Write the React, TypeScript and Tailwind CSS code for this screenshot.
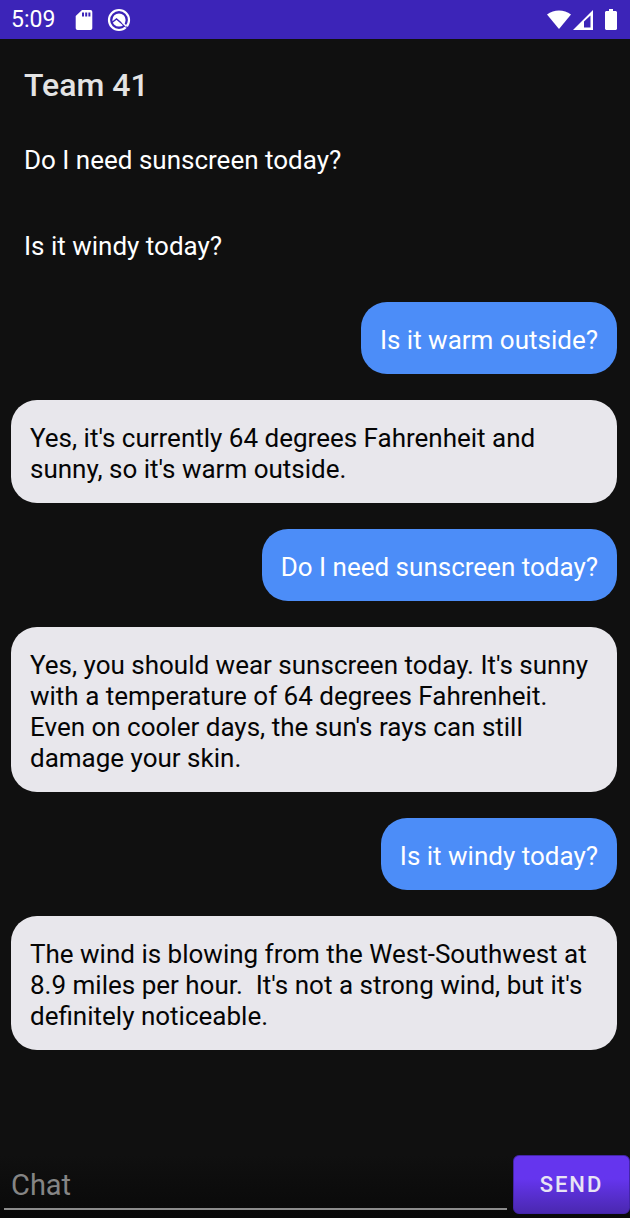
import { useState } from "react";

type Message = { from: "me" | "bot"; text: string };

const suggestions = ["Do I need sunscreen today?", "Is it windy today?"];

const initialMessages: Message[] = [
  { from: "me", text: "Is it warm outside?" },
  { from: "bot", text: "Yes, it's currently 64 degrees Fahrenheit and sunny, so it's warm outside." },
  { from: "me", text: "Do I need sunscreen today?" },
  {
    from: "bot",
    text: "Yes, you should wear sunscreen today. It's sunny with a temperature of 64 degrees Fahrenheit. Even on cooler days, the sun's rays can still damage your skin.",
  },
  { from: "me", text: "Is it windy today?" },
  {
    from: "bot",
    text: "The wind is blowing from the West-Southwest at 8.9 miles per hour.  It's not a strong wind, but it's definitely noticeable.",
  },
];

function StatusBar() {
  return (
    <div className="flex h-[39px] shrink-0 items-center bg-[#3c24b8] pr-[13px] pl-[11px] text-white">
      <span className="pt-px text-[23px] leading-7">5:09</span>
      <svg className="ml-5 h-[22px] w-[18px]" viewBox="0 0 18 22" aria-hidden="true">
        <path fill="#fff" fillRule="evenodd" d="M7 1h8.5A1.8 1.8 0 0 1 17.300 2.800v16.400a1.800 1.800 0 0 1-1.800 1.800h-13A1.800 1.800 0 0 1 .7 19.200V7zM7 3.500v4h2v-4zm3.200 0v4h2v-4zm3.200 0v4h2v-4z" />
      </svg>
      <svg className="ml-[14px] size-6" viewBox="0 0 24 24" fill="none" aria-hidden="true">
        <circle cx="12" cy="12" r="10" stroke="#fff" strokeWidth="2.200" />
        <circle cx="12" cy="12" r="6.600" fill="#fff" />
        <path d="M5 14.500 9.500 11 19 19" stroke="#3c24b8" strokeWidth="1.500" />
        <path d="m18 17.500 4 3.500" stroke="#3c24b8" strokeWidth="1.500" />
        <path d="m15 14 4.500 4.500" stroke="#fff" strokeWidth="1.500" />
      </svg>
      <span className="grow" />
      <svg className="h-5 w-6" viewBox="0 0 24 20" fill="#fff" aria-hidden="true">
        <path d="M0 4.500C7-1 17-1 24 4.500L12 19z" />
      </svg>
      <svg className="ml-0.5 size-5" viewBox="0 0 20 20" fill="#fff" aria-hidden="true">
        <path fillRule="evenodd" d="M0 20 20 0v20zM11 11.500V17.500h6.500V5.500z" />
      </svg>
      <svg className="ml-3 h-[21px] w-3" viewBox="0 0 12 21" fill="#fff" aria-hidden="true">
        <path d="M4 0h4v2h3l1 1v17l-1 1H1l-1-1V3l1-1h3z" />
      </svg>
    </div>
  );
}

export default function App() {
  const [messages, setMessages] = useState(initialMessages);
  const [draft, setDraft] = useState("");

  const send = (text: string) => {
    if (text.trim()) setMessages([...messages, { from: "me", text }]);
    setDraft("");
  };

  return (
    <div className="flex min-h-screen flex-col bg-[#101010] font-['Roboto',sans-serif] text-[26px] leading-[31px] text-white">
      <StatusBar />
      <main className="flex grow flex-col">
        <h1 className="px-6 pt-[26px] text-[32px] leading-10 font-medium text-[#e4e4e4]">Team 41</h1>
        <div className="flex flex-col items-start gap-[55px] px-6 pt-10">
          {suggestions.map((s) => (
            <button key={s} type="button" className="text-left" onClick={() => send(s)}>
              {s}
            </button>
          ))}
        </div>
        <ul className="flex flex-col gap-[26px] pt-10 pr-[13px] pb-6 pl-[11px]">
          {messages.map((m, i) => (
            <li
              key={i}
              className={
                m.from === "me"
                  ? "self-end rounded-[26px] bg-[#4c8df8] px-[19px] pt-[23px] pb-[18px] text-white"
                  : "rounded-[26px] bg-[#e8e7ec] px-[19px] pt-[23px] pb-[18px] whitespace-pre-wrap text-[#050505]"
              }
            >
              {m.text}
            </li>
          ))}
        </ul>
      </main>
      <form
        className="flex shrink-0 items-end bg-linear-to-b from-[#101010] to-[#090909] pl-1"
        onSubmit={(e) => {
          e.preventDefault();
          send(draft);
        }}
      >
        <input
          aria-label="Chat"
          placeholder="Chat"
          value={draft}
          onChange={(e) => setDraft(e.target.value)}
          className="mr-1.5 mb-2 h-[54px] min-w-0 grow border-b-2 border-[#8c8c8c] bg-transparent px-[7px] pt-1.5 text-[29px] outline-none placeholder:text-[#858585]"
        />
        <button
          type="submit"
          className="mb-1 h-[59px] w-[117px] rounded-md border border-[#4325a8] bg-linear-to-b from-[#6535ee] from-40% to-[#4a28b0] text-[22px] font-medium tracking-[2px] text-[#e8e4f4]"
        >
          SEND
        </button>
      </form>
    </div>
  );
}
